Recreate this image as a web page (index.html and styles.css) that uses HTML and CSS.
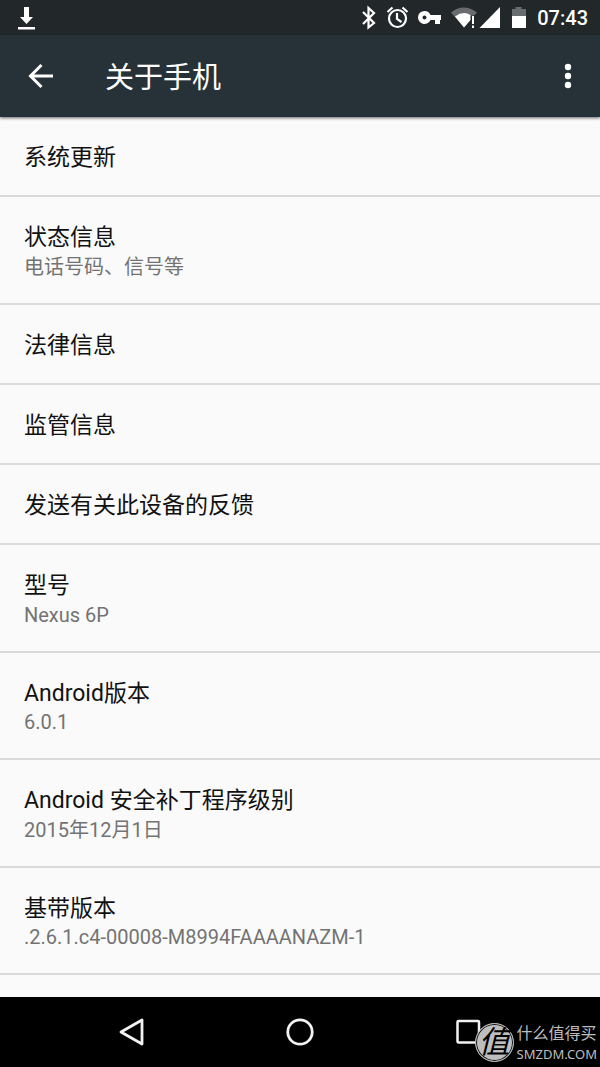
FILE: index.html
```html
<!DOCTYPE html>
<html lang="zh-CN">
<head>
<meta charset="utf-8">
<meta name="viewport" content="width=device-width, initial-scale=1">
<title>关于手机</title>
<link rel="stylesheet" href="styles.css">
</head>
<body>
<div class="status-bar">
  <svg class="download" width="20" height="26" viewBox="0 0 20 26" aria-hidden="true"><path fill="#fff" d="M7 3h5v10h4l-6.500 7-6.500-7h4zM1 23h17v2.500H1z"/></svg>
  <svg class="indicators" width="170" height="35" viewBox="0 0 170 35" aria-hidden="true">
    <path d="M3 12l11 11-5.500 4.500V8l5.500 5L3 24" fill="none" stroke="#fff" stroke-width="2.200"/>
    <g fill="none" stroke="#fff" stroke-width="2.200"><circle cx="37.500" cy="18.500" r="8.500"/><path d="M27.500 12l5-4.500M47.500 12l-5-4.500M37 13v6l4.500 3"/></g>
    <path fill="#fff" fill-rule="evenodd" d="M64.500 11a6.500 6.500 0 1 0 6 9H75v4h5v-4h1v-5H70.500a6.500 6.500 0 0 0-6-4zm0 4.500a2 2 0 1 1 0 4 2 2 0 0 1 0-4z"/>
    <path fill="#686c6e" d="M91 12.500Q103.500 2.500 117 12.500l-3 3h-4v5l-6 7z"/>
    <path fill="#fff" d="M95 16.500Q103.500 10.500 110.500 15v5L104 27.500zM112 16h2v8h-2zM112 25.500h2v2.500h-2zM119.500 28L140 7v21z"/>
    <path fill="#686c6e" d="M152 9h3.500V7h6v2h4.500v7h-14z"/><path fill="#fff" d="M152 16h14v12h-14z"/>
  </svg>
  <time class="clock">07:43</time>
</div>
<header class="app-bar">
  <button class="icon-button" aria-label="返回"><svg width="26" height="26" viewBox="0 0 26 26"><path d="M25 13H3M13.500 2L2.500 13l11 11" fill="none" stroke="#fff" stroke-width="3"/></svg></button>
  <h1 class="page-title">关于手机</h1>
  <button class="icon-button" aria-label="更多选项"><svg width="8" height="26" viewBox="0 0 8 26" fill="#fff"><circle cx="4" cy="4" r="3.200"/><circle cx="4" cy="13" r="3.200"/><circle cx="4" cy="22" r="3.200"/></svg></button>
</header>
<main class="content">
  <ul class="settings">
    <li><button class="row"><span class="title">系统更新</span></button></li>
    <li><button class="row"><span class="title">状态信息</span><span class="summary">电话号码、信号等</span></button></li>
    <li><button class="row"><span class="title">法律信息</span></button></li>
    <li><button class="row"><span class="title">监管信息</span></button></li>
    <li><button class="row"><span class="title">发送有关此设备的反馈</span></button></li>
    <li><button class="row"><span class="title">型号</span><span class="summary">Nexus 6P</span></button></li>
    <li><button class="row"><span class="title">Android版本</span><span class="summary latin">6.0.1</span></button></li>
    <li><button class="row"><span class="title">Android 安全补丁程序级别</span><span class="summary">2015年12月1日</span></button></li>
    <li><button class="row"><span class="title">基带版本</span><span class="summary latin">.2.6.1.c4-00008-M8994FAAAANAZM-1</span></button></li>
  </ul>
</main>
<nav class="nav-bar">
  <button class="nav-button" aria-label="返回"><svg width="28" height="30" viewBox="0 0 28 30"><path d="M24 3v24L3 15z" fill="none" stroke="#f2f2f2" stroke-width="2.800" stroke-linejoin="round"/></svg></button>
  <button class="nav-button" aria-label="主屏幕"><svg width="28" height="30" viewBox="0 0 28 30"><circle cx="14" cy="15" r="12.200" fill="none" stroke="#f2f2f2" stroke-width="2.800"/></svg></button>
  <button class="nav-button" aria-label="最近任务"><svg width="28" height="30" viewBox="0 0 28 30"><rect x="3.500" y="4" width="21.500" height="21.500" rx="1" fill="none" stroke="#f2f2f2" stroke-width="2.500"/></svg></button>
</nav>
<div class="watermark">
  <span class="seal">值</span>
  <span class="brand"><span class="brand-name">什么值得买</span><span class="brand-site">SMZDM.COM</span></span>
</div>
</body>
</html>
```
FILE: styles.css
```css
* { box-sizing: border-box; }

body {
  margin: 0;
  height: 100vh;
  display: flex;
  flex-direction: column;
  position: relative;
  overflow: hidden;
  background: #fafafa;
  color: #111;
  font-family: Roboto, "Noto Sans CJK SC", sans-serif;
}

button {
  padding: 0;
  border: 0;
  background: none;
  color: inherit;
  font: inherit;
}

svg { display: block; flex: none; }

.status-bar {
  flex: none;
  height: 35px;
  display: flex;
  align-items: center;
  padding: 0 12px 0 17px;
  background: #22272a;
  color: #fff;
}

.download { margin-bottom: 2px; }

.indicators { margin-left: auto; }

.clock {
  margin-left: 7px;
  font-size: 20px;
  font-weight: 500;
  line-height: 33px;
  padding-top: 2px;
}

.app-bar {
  flex: none;
  height: 82px;
  display: flex;
  align-items: center;
  padding: 0 8px 0 17px;
  background: #273238;
  color: #fff;
  box-shadow: 0 1px 3px rgba(0, 0, 0, 0.6);
  z-index: 1;
}

.icon-button {
  width: 48px;
  height: 48px;
  display: grid;
  place-items: center;
}

.page-title {
  flex: 1;
  margin: 0 0 0 40px;
  padding-top: 3px;
  font-size: 29px;
  font-weight: 400;
  line-height: 40px;
}

.content {
  flex: 1;
  min-height: 0;
  overflow: hidden;
}

.settings {
  margin: 0;
  padding: 0;
  list-style: none;
}

.row {
  display: block;
  width: 100%;
  padding: 26px 24px 22px;
  border-bottom: 2px solid #dadada;
  text-align: left;
}

.title {
  display: block;
  font-size: 23px;
  line-height: 30px;
}

.summary {
  display: block;
  color: #737373;
  font-size: 20px;
  line-height: 28px;
}

.latin { line-height: 27px; }

.nav-bar {
  flex: none;
  height: 70px;
  display: flex;
  align-items: center;
  justify-content: center;
  background: #000;
}

.nav-button {
  width: 28%;
  height: 100%;
  display: grid;
  place-items: center;
}

.watermark {
  position: absolute;
  right: 3px;
  bottom: 3px;
  z-index: 2;
  display: flex;
  align-items: flex-start;
  gap: 3px;
  color: #bebebe;
}

.seal {
  width: 39px;
  height: 39px;
  border: 1px solid #bebebe;
  border-radius: 50%;
  background: #bebebe;
  box-shadow: inset 0 0 0 1px #111;
  color: #000;
  font-size: 31px;
  font-weight: 400;
  font-style: italic;
  line-height: 37px;
  text-align: center;
}

.brand {
  display: flex;
  flex-direction: column;
}

.brand-name {
  font-size: 16px;
  line-height: 22px;
}

.brand-site {
  font-family: "Noto Sans", sans-serif;
  font-size: 13px;
  line-height: 19px;
}
```
